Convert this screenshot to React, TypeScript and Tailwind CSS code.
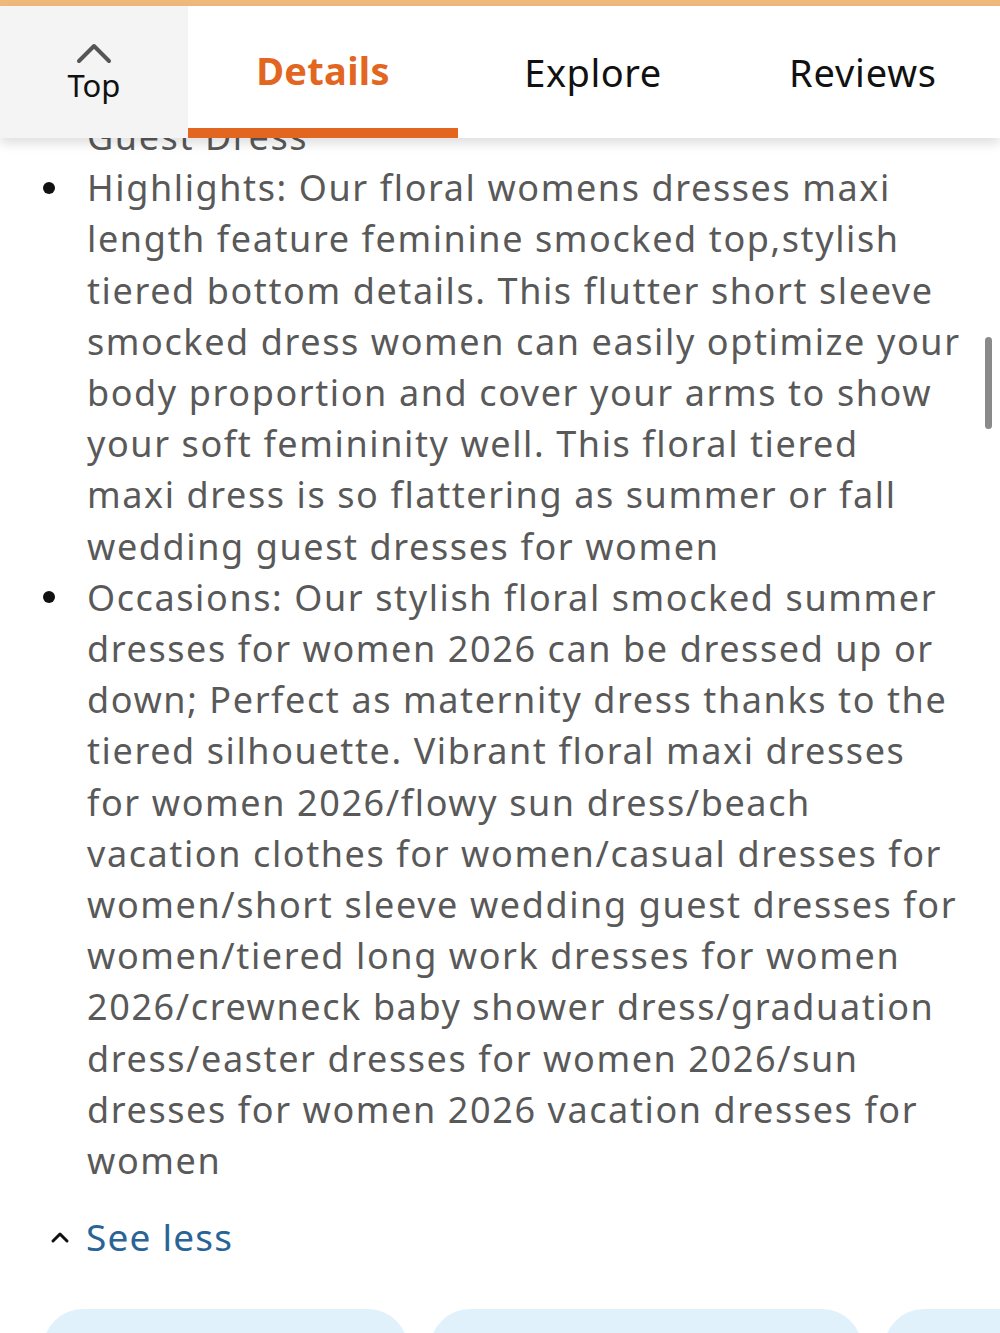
import React from "react";

const font = { fontFamily: '"Noto Sans", "Open Sans", sans-serif' };

const highlights = [
  "Highlights: Our floral womens dresses maxi",
  "length feature feminine smocked top,stylish",
  "tiered bottom details. This flutter short sleeve",
  "smocked dress women can easily optimize your",
  "body proportion and cover your arms to show",
  "your soft femininity well. This floral tiered",
  "maxi dress is so flattering as summer or fall",
  "wedding guest dresses for women",
];

const occasions = [
  "Occasions: Our stylish floral smocked summer",
  "dresses for women 2026 can be dressed up or",
  "down; Perfect as maternity dress thanks to the",
  "tiered silhouette. Vibrant floral maxi dresses",
  "for women 2026/flowy sun dress/beach",
  "vacation clothes for women/casual dresses for",
  "women/short sleeve wedding guest dresses for",
  "women/tiered long work dresses for women",
  "2026/crewneck baby shower dress/graduation",
  "dress/easter dresses for women 2026/sun",
  "dresses for women 2026 vacation dresses for",
  "women",
];

function Header() {
  return (
    <div className="absolute left-0 right-0 top-0 z-10">
      <div className="h-[6px] bg-[#efb97c]" />
      <div className="flex h-[132px] bg-white shadow-[0_6px_10px_rgba(0,0,0,0.12)]">
        <div className="flex w-[188px] flex-col items-center justify-center bg-[#f3f4f3] pb-[2px]">
          <svg width="38" height="24" viewBox="0 0 38 24" fill="none" className="mb-[4px]">
            <path d="M4 21 L19 6 L34 21" stroke="#555" strokeWidth="4" strokeLinecap="round" strokeLinejoin="round" />
          </svg>
          <span className="text-[31px] leading-[34px] text-[#111]">Top</span>
        </div>
        <div className="relative flex w-[270px] items-center justify-center">
          <span className="-mt-[4px] text-[38px] font-bold tracking-[0.3px] text-[#e2661f]">Details</span>
          <div className="absolute bottom-0 left-0 right-0 h-[10px] bg-[#e2661f]" />
        </div>
        <div className="flex w-[270px] items-center justify-center">
          <span className="text-[38px] tracking-[0.5px] text-[#111]">Explore</span>
        </div>
        <div className="flex w-[270px] items-center justify-center">
          <span className="text-[38px] tracking-[0.8px] text-[#111]">Reviews</span>
        </div>
      </div>
    </div>
  );
}

function Bullet({ lines }: { lines: string[] }) {
  return (
    <li className="flex">
      <span className="flex h-[51.2px] w-[87px] shrink-0 items-center pl-[43px]">
        <span className="h-[12px] w-[12px] rounded-full bg-[#111]" />
      </span>
      <span className="flex flex-col">
        {lines.map((l) => (
          <span key={l} className="whitespace-nowrap">
            {l}
          </span>
        ))}
      </span>
    </li>
  );
}

export default function App() {
  return (
    <div className="relative h-[1333px] w-[1000px] overflow-hidden bg-white" style={font}>
      <Header />
      <div className="pt-[111px] text-[36px] leading-[51.2px] tracking-[1.6px] text-[#595959]">
        <div className="pl-[87px]">Guest Dress</div>
        <ul>
          <Bullet lines={highlights} />
          <Bullet lines={occasions} />
        </ul>
        <div className="mt-[25px] flex items-center pl-[50px]">
          <svg width="20" height="14" viewBox="0 0 20 14" fill="none" className="mr-[16px]">
            <path d="M3 11 L10 4 L17 11" stroke="#111" strokeWidth="3" strokeLinecap="round" strokeLinejoin="round" />
          </svg>
          <span className="text-[37px] tracking-[1.2px] text-[#2a6496]">See less</span>
        </div>
      </div>
      <div className="absolute right-[8px] top-[337px] h-[92px] w-[7px] rounded-full bg-[#8a8a8a]" />
      <div className="absolute left-0 top-[1309px] flex gap-[22px] pl-[43px]">
        <div className="h-[60px] w-[365px] rounded-t-[40px] bg-[#e0f1fc]" />
        <div className="h-[60px] w-[432px] rounded-t-[40px] bg-[#e0f1fc]" />
        <div className="h-[60px] w-[300px] rounded-t-[40px] bg-[#e0f1fc]" />
      </div>
    </div>
  );
}
